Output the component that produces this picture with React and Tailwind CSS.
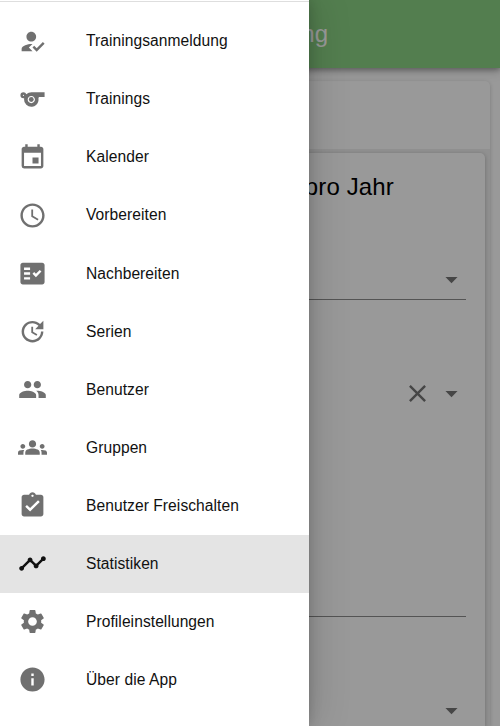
import {
  MdHowToReg, MdSports, MdEvent, MdAccessTime, MdFactCheck, MdUpdate, MdPeople,
  MdGroups, MdAssignmentTurnedIn, MdTimeline, MdSettings, MdInfo, MdArrowDropDown, MdClose,
} from "react-icons/md";

const items = [
  ["Trainingsanmeldung", MdHowToReg],
  ["Trainings", MdSports],
  ["Kalender", MdEvent],
  ["Vorbereiten", MdAccessTime],
  ["Nachbereiten", MdFactCheck],
  ["Serien", MdUpdate],
  ["Benutzer", MdPeople],
  ["Gruppen", MdGroups],
  ["Benutzer Freischalten", MdAssignmentTurnedIn],
  ["Statistiken", MdTimeline],
  ["Profileinstellungen", MdSettings],
  ["Über die App", MdInfo],
];

function Page() {
  return (
    <div className="flex h-full flex-col bg-white">
      <header className="relative z-10 flex h-[68px] shrink-0 items-center bg-[#8ad384] shadow-[0_2px_5px_rgba(0,0,0,0.3),0_4px_10px_rgba(0,0,0,0.15)]">
        <h1 className="w-[328px] text-right text-[24px] leading-8 text-white">Planung</h1>
      </header>
      <main className="mt-[13px] mr-[10px] flex flex-1 flex-col rounded-tr-[5px] shadow-[0_1px_4px_rgba(0,0,0,0.2)]">
        <div className="h-[68px] shrink-0" />
        <div className="flex-1 bg-[#f0f0f0] pt-[4px] pr-[5px]">
          <section className="flex h-full flex-col rounded-tr-[5px] bg-white pr-[19px] shadow-[0_1px_4px_rgba(0,0,0,0.25)]">
            <h2 className="mt-[18px] w-[394px] text-right text-[24px] leading-8 tracking-[0.15px] text-black">Trainings pro Jahr</h2>
            <div className="mt-[56px] flex h-[41px] justify-end border-b border-[#8c8c8c] text-[#757575]">
              <MdArrowDropDown className="mt-[6px] size-[29px]" />
            </div>
            <div className="mt-[79px] flex h-[238px] justify-end gap-[5px] border-b border-[#8c8c8c] text-[#757575]">
              <MdClose className="size-[29px]" />
              <MdArrowDropDown className="size-[29px]" />
            </div>
            <div className="mt-[79px] flex justify-end text-[#757575]">
              <MdArrowDropDown className="size-[29px]" />
            </div>
          </section>
        </div>
      </main>
    </div>
  );
}

export default function App() {
  return (
    <div className="relative h-[726px] w-[500px] overflow-hidden font-['Liberation_Sans',Arial,sans-serif]">
      <Page />
      <div className="absolute inset-0 z-20 bg-black/40" />
      <aside className="absolute inset-y-0 left-0 z-30 w-[308.5px] bg-white pt-px shadow-[0_0_12px_rgba(0,0,0,0.2),6px_0_36px_rgba(0,0,0,0.14)]">
        <hr className="h-px border-0 bg-[#dedede]" />
        <nav className="pt-[10.3px]">
          {items.map(([label, Icon]) => (
            <a
              key={label}
              className={
                label === "Statistiken"
                  ? "flex h-[58.06px] items-center bg-[#e4e4e4] pl-[18px] text-[#111]"
                  : "flex h-[58.06px] items-center pl-[18px] text-[#707070]"
              }
            >
              <Icon className="mr-[39px] size-[29px]" />
              <span className="text-[15.6px] leading-6 tracking-[0.06px] text-[#111]">{label}</span>
            </a>
          ))}
        </nav>
      </aside>
    </div>
  );
}
